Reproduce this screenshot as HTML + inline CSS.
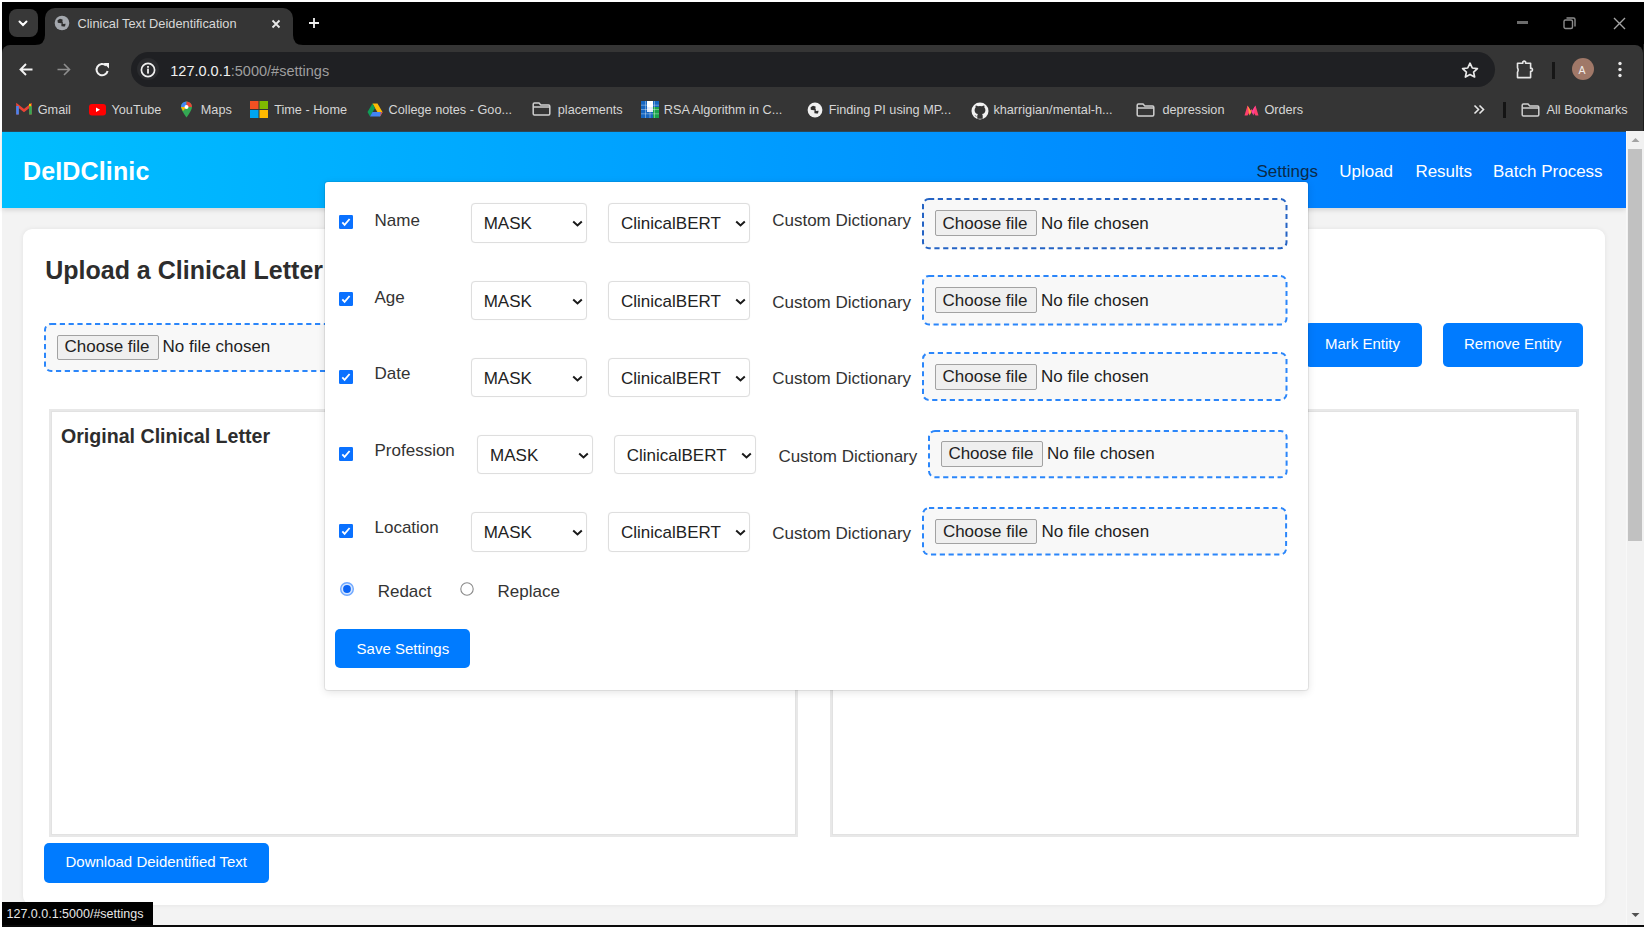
<!DOCTYPE html>
<html><head><meta charset="utf-8"><style>
*{box-sizing:border-box;margin:0;padding:0}
html,body{width:1644px;height:928px;overflow:hidden;background:#fff;font-family:"Liberation Sans",sans-serif}
.a{position:absolute}
.t{position:absolute;white-space:nowrap;line-height:1}
svg{position:absolute;overflow:visible}
</style></head><body>
<div class="a" style="left:2.0px;top:131.0px;width:1625.0px;height:794.0px;background:#f3f3f3"></div>
<div class="a" style="left:2.0px;top:131.0px;width:1624.0px;height:77.0px;background:linear-gradient(90deg,#00bfff 0%,#0074ff 100%);box-shadow:0 2px 5px rgba(0,0,0,.13)"></div>
<div class="a" style="left:2.0px;top:131.0px;width:1624.0px;height:1.0px;background:#2c4656"></div>
<div class="t" style="left:23.0px;top:159.0px;font-size:25px;color:#fff;font-weight:bold;letter-spacing:0.15px">DeIDClinic</div>
<div class="t" style="left:1256.5px;top:162.9px;font-size:17px;color:#0b2a4a;font-weight:normal;">Settings</div>
<div class="t" style="left:1339.2px;top:162.9px;font-size:17px;color:#fff;font-weight:normal;">Upload</div>
<div class="t" style="left:1415.4px;top:162.9px;font-size:17px;color:#fff;font-weight:normal;">Results</div>
<div class="t" style="left:1493.0px;top:162.9px;font-size:17px;color:#fff;font-weight:normal;">Batch Process</div>
<div class="a" style="left:23.0px;top:229.0px;width:1582.0px;height:676.0px;background:#fff;border-radius:9px;box-shadow:0 0 5px rgba(0,0,0,.07)"></div>
<div class="t" style="left:45.2px;top:258.4px;font-size:25px;color:#2d2d2d;font-weight:bold;">Upload a Clinical Letter</div>
<svg style="left:44.0px;top:323.0px" width="956.0" height="49.0"><rect x="1" y="1" width="954.0" height="47.0" rx="6" ry="6" fill="#f8f8f8" stroke="#2b86fa" stroke-width="2" stroke-dasharray="5.2 3.6"/></svg>
<div class="a" style="left:57.0px;top:334.5px;width:102.0px;height:25.5px;background:#efefef;border:1px solid #a2a2a2;border-radius:2px"></div>
<div class="t" style="left:64.5px;top:337.8px;font-size:17px;color:#222;font-weight:normal;">Choose file</div>
<div class="t" style="left:162.6px;top:337.8px;font-size:17px;color:#1e1e1e;font-weight:normal;">No file chosen</div>
<div class="a" style="left:1305.0px;top:323.0px;width:116.5px;height:44.0px;background:#007bff;border-radius:5px"></div>
<div class="t" style="left:1325.0px;top:336.0px;font-size:15px;color:#fff;font-weight:normal;">Mark Entity</div>
<div class="a" style="left:1443.0px;top:323.0px;width:139.5px;height:44.0px;background:#007bff;border-radius:5px"></div>
<div class="t" style="left:1464.0px;top:336.0px;font-size:15px;color:#fff;font-weight:normal;">Remove Entity</div>
<div class="a" style="left:49.0px;top:409.0px;width:749.0px;height:428.0px;background:#fff;border:2px solid #e8e8e8;box-shadow:inset 0 0 0 1px #e2e2e2"></div>
<div class="a" style="left:830.0px;top:409.0px;width:749.0px;height:428.0px;background:#fff;border:2px solid #e8e8e8;box-shadow:inset 0 0 0 1px #e2e2e2"></div>
<div class="t" style="left:61.0px;top:426.9px;font-size:19.6px;color:#2d2d2d;font-weight:bold;">Original Clinical Letter</div>
<div class="a" style="left:44.0px;top:843.0px;width:225.0px;height:40.0px;background:#007bff;border-radius:5px"></div>
<div class="t" style="left:65.5px;top:854.4px;font-size:15px;color:#fff;font-weight:normal;">Download Deidentified Text</div>
<div class="a" style="left:324.8px;top:182.2px;width:983.7px;height:507.8px;background:#fff;border-radius:3px;box-shadow:0 0 0 1px rgba(0,0,0,.07),0 2px 8px rgba(0,0,0,.12)"></div>
<svg style="left:339px;top:215px" width="14" height="14" viewBox="0 0 14 14"><rect x="0" y="0" width="14" height="14" rx="1.2" fill="#0a71ff"/><path d="M3.3 7.4 L5.6 9.9 L10.6 4" stroke="#fff" stroke-width="1.8" fill="none"/></svg>
<div class="t" style="left:374.5px;top:211.8px;font-size:17px;color:#333;font-weight:normal;">Name</div>
<div class="a" style="left:470.5px;top:203.4px;width:116.0px;height:39.8px;background:#fff;border:1px solid #dedede;border-radius:4px;box-shadow:0 0 1px rgba(0,0,0,.08)"></div>
<div class="t" style="left:483.7px;top:215.3px;font-size:17px;color:#222;font-weight:normal;">MASK</div>
<svg style="left:571.5px;top:220.4px" width="11" height="7" viewBox="0 0 11 7"><path d="M1.2 1.5 L5.5 5.4 L9.8 1.5" stroke="#1a1a1a" stroke-width="2" fill="none"/></svg>
<div class="a" style="left:607.8px;top:203.4px;width:142.5px;height:39.8px;background:#fff;border:1px solid #dedede;border-radius:4px;box-shadow:0 0 1px rgba(0,0,0,.08)"></div>
<div class="t" style="left:621.0px;top:215.3px;font-size:17px;color:#222;font-weight:normal;">ClinicalBERT</div>
<svg style="left:735.3px;top:220.4px" width="11" height="7" viewBox="0 0 11 7"><path d="M1.2 1.5 L5.5 5.4 L9.8 1.5" stroke="#1a1a1a" stroke-width="2" fill="none"/></svg>
<div class="t" style="left:772.2px;top:212.4px;font-size:17px;color:#333;font-weight:normal;">Custom Dictionary</div>
<svg style="left:922.0px;top:197.7px" width="365.5" height="51.2"><rect x="1" y="1" width="363.5" height="49.2" rx="6" ry="6" fill="#f8f8f8" stroke="#2463c4" stroke-width="2" stroke-dasharray="5.2 3.6"/></svg>
<div class="a" style="left:935.0px;top:210.0px;width:102.0px;height:25.5px;background:#efefef;border:1px solid #a2a2a2;border-radius:2px"></div>
<div class="t" style="left:942.5px;top:214.5px;font-size:17px;color:#222;font-weight:normal;">Choose file</div>
<div class="t" style="left:1041.1px;top:214.5px;font-size:17px;color:#1e1e1e;font-weight:normal;">No file chosen</div>
<svg style="left:339px;top:292.3px" width="14" height="14" viewBox="0 0 14 14"><rect x="0" y="0" width="14" height="14" rx="1.2" fill="#0a71ff"/><path d="M3.3 7.4 L5.6 9.9 L10.6 4" stroke="#fff" stroke-width="1.8" fill="none"/></svg>
<div class="t" style="left:374.5px;top:289.0px;font-size:17px;color:#333;font-weight:normal;">Age</div>
<div class="a" style="left:470.5px;top:280.6px;width:116.0px;height:39.8px;background:#fff;border:1px solid #dedede;border-radius:4px;box-shadow:0 0 1px rgba(0,0,0,.08)"></div>
<div class="t" style="left:483.7px;top:292.5px;font-size:17px;color:#222;font-weight:normal;">MASK</div>
<svg style="left:571.5px;top:297.6px" width="11" height="7" viewBox="0 0 11 7"><path d="M1.2 1.5 L5.5 5.4 L9.8 1.5" stroke="#1a1a1a" stroke-width="2" fill="none"/></svg>
<div class="a" style="left:607.8px;top:280.6px;width:142.5px;height:39.8px;background:#fff;border:1px solid #dedede;border-radius:4px;box-shadow:0 0 1px rgba(0,0,0,.08)"></div>
<div class="t" style="left:621.0px;top:292.5px;font-size:17px;color:#222;font-weight:normal;">ClinicalBERT</div>
<svg style="left:735.3px;top:297.6px" width="11" height="7" viewBox="0 0 11 7"><path d="M1.2 1.5 L5.5 5.4 L9.8 1.5" stroke="#1a1a1a" stroke-width="2" fill="none"/></svg>
<div class="t" style="left:772.2px;top:293.9px;font-size:17px;color:#333;font-weight:normal;">Custom Dictionary</div>
<svg style="left:922.0px;top:275.0px" width="365.5" height="50.4"><rect x="1" y="1" width="363.5" height="48.4" rx="6" ry="6" fill="#f8f8f8" stroke="#2b86fa" stroke-width="2" stroke-dasharray="5.2 3.6"/></svg>
<div class="a" style="left:935.0px;top:287.2px;width:102.0px;height:25.5px;background:#efefef;border:1px solid #a2a2a2;border-radius:2px"></div>
<div class="t" style="left:942.5px;top:291.6px;font-size:17px;color:#222;font-weight:normal;">Choose file</div>
<div class="t" style="left:1041.1px;top:291.6px;font-size:17px;color:#1e1e1e;font-weight:normal;">No file chosen</div>
<svg style="left:339px;top:370px" width="14" height="14" viewBox="0 0 14 14"><rect x="0" y="0" width="14" height="14" rx="1.2" fill="#0a71ff"/><path d="M3.3 7.4 L5.6 9.9 L10.6 4" stroke="#fff" stroke-width="1.8" fill="none"/></svg>
<div class="t" style="left:374.5px;top:365.1px;font-size:17px;color:#333;font-weight:normal;">Date</div>
<div class="a" style="left:470.5px;top:357.6px;width:116.0px;height:39.8px;background:#fff;border:1px solid #dedede;border-radius:4px;box-shadow:0 0 1px rgba(0,0,0,.08)"></div>
<div class="t" style="left:483.7px;top:369.5px;font-size:17px;color:#222;font-weight:normal;">MASK</div>
<svg style="left:571.5px;top:374.6px" width="11" height="7" viewBox="0 0 11 7"><path d="M1.2 1.5 L5.5 5.4 L9.8 1.5" stroke="#1a1a1a" stroke-width="2" fill="none"/></svg>
<div class="a" style="left:607.8px;top:357.6px;width:142.5px;height:39.8px;background:#fff;border:1px solid #dedede;border-radius:4px;box-shadow:0 0 1px rgba(0,0,0,.08)"></div>
<div class="t" style="left:621.0px;top:369.5px;font-size:17px;color:#222;font-weight:normal;">ClinicalBERT</div>
<svg style="left:735.3px;top:374.6px" width="11" height="7" viewBox="0 0 11 7"><path d="M1.2 1.5 L5.5 5.4 L9.8 1.5" stroke="#1a1a1a" stroke-width="2" fill="none"/></svg>
<div class="t" style="left:772.2px;top:370.4px;font-size:17px;color:#333;font-weight:normal;">Custom Dictionary</div>
<svg style="left:922.0px;top:352.3px" width="365.5" height="49.0"><rect x="1" y="1" width="363.5" height="47.0" rx="6" ry="6" fill="#f8f8f8" stroke="#2b86fa" stroke-width="2" stroke-dasharray="5.2 3.6"/></svg>
<div class="a" style="left:935.0px;top:364.0px;width:102.0px;height:25.5px;background:#efefef;border:1px solid #a2a2a2;border-radius:2px"></div>
<div class="t" style="left:942.5px;top:368.2px;font-size:17px;color:#222;font-weight:normal;">Choose file</div>
<div class="t" style="left:1041.1px;top:368.2px;font-size:17px;color:#1e1e1e;font-weight:normal;">No file chosen</div>
<svg style="left:339px;top:447.4px" width="14" height="14" viewBox="0 0 14 14"><rect x="0" y="0" width="14" height="14" rx="1.2" fill="#0a71ff"/><path d="M3.3 7.4 L5.6 9.9 L10.6 4" stroke="#fff" stroke-width="1.8" fill="none"/></svg>
<div class="t" style="left:374.5px;top:441.6px;font-size:17px;color:#333;font-weight:normal;">Profession</div>
<div class="a" style="left:476.9px;top:434.6px;width:116.0px;height:39.8px;background:#fff;border:1px solid #dedede;border-radius:4px;box-shadow:0 0 1px rgba(0,0,0,.08)"></div>
<div class="t" style="left:490.1px;top:446.5px;font-size:17px;color:#222;font-weight:normal;">MASK</div>
<svg style="left:577.9px;top:451.6px" width="11" height="7" viewBox="0 0 11 7"><path d="M1.2 1.5 L5.5 5.4 L9.8 1.5" stroke="#1a1a1a" stroke-width="2" fill="none"/></svg>
<div class="a" style="left:613.5px;top:434.6px;width:142.5px;height:39.8px;background:#fff;border:1px solid #dedede;border-radius:4px;box-shadow:0 0 1px rgba(0,0,0,.08)"></div>
<div class="t" style="left:626.7px;top:446.5px;font-size:17px;color:#222;font-weight:normal;">ClinicalBERT</div>
<svg style="left:741.0px;top:451.6px" width="11" height="7" viewBox="0 0 11 7"><path d="M1.2 1.5 L5.5 5.4 L9.8 1.5" stroke="#1a1a1a" stroke-width="2" fill="none"/></svg>
<div class="t" style="left:778.4px;top:447.6px;font-size:17px;color:#333;font-weight:normal;">Custom Dictionary</div>
<svg style="left:927.9px;top:430.3px" width="359.6" height="48.2"><rect x="1" y="1" width="357.6" height="46.2" rx="6" ry="6" fill="#f8f8f8" stroke="#2b86fa" stroke-width="2" stroke-dasharray="5.2 3.6"/></svg>
<div class="a" style="left:940.9px;top:441.4px;width:102.0px;height:25.5px;background:#efefef;border:1px solid #a2a2a2;border-radius:2px"></div>
<div class="t" style="left:948.4px;top:445.0px;font-size:17px;color:#222;font-weight:normal;">Choose file</div>
<div class="t" style="left:1047.0px;top:445.0px;font-size:17px;color:#1e1e1e;font-weight:normal;">No file chosen</div>
<svg style="left:339px;top:523.6px" width="14" height="14" viewBox="0 0 14 14"><rect x="0" y="0" width="14" height="14" rx="1.2" fill="#0a71ff"/><path d="M3.3 7.4 L5.6 9.9 L10.6 4" stroke="#fff" stroke-width="1.8" fill="none"/></svg>
<div class="t" style="left:374.5px;top:518.6px;font-size:17px;color:#333;font-weight:normal;">Location</div>
<div class="a" style="left:470.5px;top:511.8px;width:116.0px;height:39.8px;background:#fff;border:1px solid #dedede;border-radius:4px;box-shadow:0 0 1px rgba(0,0,0,.08)"></div>
<div class="t" style="left:483.7px;top:523.7px;font-size:17px;color:#222;font-weight:normal;">MASK</div>
<svg style="left:571.5px;top:528.8px" width="11" height="7" viewBox="0 0 11 7"><path d="M1.2 1.5 L5.5 5.4 L9.8 1.5" stroke="#1a1a1a" stroke-width="2" fill="none"/></svg>
<div class="a" style="left:607.8px;top:511.8px;width:142.5px;height:39.8px;background:#fff;border:1px solid #dedede;border-radius:4px;box-shadow:0 0 1px rgba(0,0,0,.08)"></div>
<div class="t" style="left:621.0px;top:523.7px;font-size:17px;color:#222;font-weight:normal;">ClinicalBERT</div>
<svg style="left:735.3px;top:528.8px" width="11" height="7" viewBox="0 0 11 7"><path d="M1.2 1.5 L5.5 5.4 L9.8 1.5" stroke="#1a1a1a" stroke-width="2" fill="none"/></svg>
<div class="t" style="left:772.2px;top:524.5px;font-size:17px;color:#333;font-weight:normal;">Custom Dictionary</div>
<svg style="left:922.4px;top:506.7px" width="365.1" height="48.6"><rect x="1" y="1" width="363.1" height="46.6" rx="6" ry="6" fill="#f8f8f8" stroke="#2b86fa" stroke-width="2" stroke-dasharray="5.2 3.6"/></svg>
<div class="a" style="left:935.4px;top:518.9px;width:102.0px;height:25.5px;background:#efefef;border:1px solid #a2a2a2;border-radius:2px"></div>
<div class="t" style="left:942.9px;top:522.5px;font-size:17px;color:#222;font-weight:normal;">Choose file</div>
<div class="t" style="left:1041.5px;top:522.5px;font-size:17px;color:#1e1e1e;font-weight:normal;">No file chosen</div>
<svg style="left:340px;top:582px" width="14" height="14" viewBox="0 0 14 14"><circle cx="7" cy="7" r="6.3" fill="#d6e6ff" stroke="#6fa8ff" stroke-width="1.4"/><circle cx="7" cy="7" r="3.9" fill="#0a64f5"/></svg>
<div class="t" style="left:377.7px;top:583.4px;font-size:17px;color:#333;font-weight:normal;">Redact</div>
<svg style="left:460px;top:582px" width="14" height="14" viewBox="0 0 14 14"><circle cx="7" cy="7" r="6.2" fill="#fff" stroke="#8a8a8a" stroke-width="1.1"/></svg>
<div class="t" style="left:497.5px;top:583.4px;font-size:17px;color:#333;font-weight:normal;">Replace</div>
<div class="a" style="left:335.3px;top:628.5px;width:134.7px;height:39.5px;background:#007bff;border-radius:5px"></div>
<div class="t" style="left:356.6px;top:640.9px;font-size:15px;color:#fff;font-weight:normal;">Save Settings</div>
<div class="a" style="left:1626.0px;top:131.0px;width:18.0px;height:794.0px;background:#f1f1f1;border-left:1px solid #f8f8f8"></div>
<div class="a" style="left:1628.0px;top:148.5px;width:14.0px;height:392.5px;background:#c1c1c1"></div>
<svg style="left:1631px;top:137px" width="9" height="6" viewBox="0 0 9 6"><path d="M0.5 5 L4.5 1 L8.5 5 Z" fill="#a3a3a3"/></svg>
<svg style="left:1631px;top:912px" width="9" height="6" viewBox="0 0 9 6"><path d="M0.5 1 L4.5 5 L8.5 1 Z" fill="#505050"/></svg>
<div class="a" style="left:2.0px;top:2.0px;width:1642.0px;height:54.0px;background:#000"></div>
<div class="a" style="left:9.0px;top:9.0px;width:29.0px;height:28.0px;background:#383838;border-radius:8px"></div>
<svg style="left:17.0px;top:19.0px" width="12" height="9" viewBox="0 0 12 9"><path d="M2.5 2.5 L6 6 L9.5 2.5" stroke="#fff" stroke-width="2" fill="none" stroke-linecap="round"/></svg>
<div class="a" style="left:45.0px;top:8.0px;width:248.0px;height:37.0px;background:#353535;border-radius:10px 10px 0 0"></div>
<svg style="left:35.0px;top:35.0px" width="10" height="10" viewBox="0 0 10 10"><path d="M0 10 Q10 10 10 0 L10 10 Z" fill="#353535"/></svg>
<svg style="left:293.0px;top:35.0px" width="10" height="10" viewBox="0 0 10 10"><path d="M10 10 Q0 10 0 0 L0 10 Z" fill="#353535"/></svg>
<svg style="left:53.5px;top:14.8px" width="16" height="16" viewBox="0 0 16 16"><circle cx="8" cy="8" r="7.3" fill="#a4a8ae"/><path d="M3.5 5.2 L6 3.8 L8.6 4.4 L8.4 7.2 L6.6 8.2 L3.8 7.8 Z M7.4 7 H8.8 V11.2 H7.4 Z M8.6 9 L11.6 8.8 L11 11.6 L8.6 11.4 Z" fill="#2e2e2e"/></svg>
<div class="t" style="left:77.5px;top:18.2px;font-size:12.8px;color:#d8d8d8;font-weight:normal;">Clinical Text Deidentification</div>
<svg style="left:271.0px;top:19.0px" width="10" height="10" viewBox="0 0 10 10"><path d="M1.5 1.5 L8.5 8.5 M8.5 1.5 L1.5 8.5" stroke="#e8e8e8" stroke-width="1.8"/></svg>
<svg style="left:308.0px;top:17.0px" width="12" height="12" viewBox="0 0 12 12"><path d="M6 1 V11 M1 6 H11" stroke="#f0f0f0" stroke-width="1.8"/></svg>
<div class="a" style="left:1516.5px;top:21.2px;width:11.5px;height:3.0px;background:#6c6c6c"></div>
<svg style="left:1563.0px;top:17.0px" width="13" height="13" viewBox="0 0 13 13"><rect x="1" y="3" width="8.5" height="8.5" rx="1.5" fill="none" stroke="#8c8c8c" stroke-width="1.4"/><path d="M3.5 1 H10.5 Q12 1 12 2.5 V9.5" fill="none" stroke="#8c8c8c" stroke-width="1.4"/></svg>
<svg style="left:1613.0px;top:17.0px" width="13" height="13" viewBox="0 0 13 13"><path d="M1 1 L12 12 M12 1 L1 12" stroke="#a4a4a4" stroke-width="1.4"/></svg>
<div class="a" style="left:2.0px;top:44.5px;width:1641.0px;height:86.5px;background:#353535;border-radius:8px 8px 0 0"></div>
<svg style="left:18.0px;top:62.0px" width="16" height="15" viewBox="0 0 16 15"><path d="M14.5 7.5 H2.5 M8 2 L2.5 7.5 L8 13" stroke="#f2f2f2" stroke-width="1.9" fill="none"/></svg>
<svg style="left:56.0px;top:62.0px" width="16" height="15" viewBox="0 0 16 15"><path d="M1.5 7.5 H13.5 M8 2 L13.5 7.5 L8 13" stroke="#8e8e8e" stroke-width="1.6" fill="none"/></svg>
<svg style="left:95.0px;top:62.0px" width="16" height="16" viewBox="0 0 16 16"><path d="M12.6 9 A5.6 5.6 0 1 1 11 3.6" stroke="#f2f2f2" stroke-width="2" fill="none"/><path d="M8.5 1 L14 1 L14 6.5 Z" fill="#f2f2f2"/></svg>
<div class="a" style="left:131.4px;top:51.5px;width:1363.6px;height:35.5px;background:#1f2023;border-radius:18px"></div>
<div class="a" style="left:137.4px;top:58.2px;width:22.0px;height:22.0px;background:#2a2b2e;border-radius:50%"></div>
<svg style="left:140.0px;top:61.5px" width="16" height="16" viewBox="0 0 16 16"><circle cx="8" cy="8" r="6.6" fill="none" stroke="#f0f0f0" stroke-width="1.7"/><rect x="7.1" y="6.6" width="1.8" height="5" fill="#f0f0f0"/><rect x="7.1" y="4" width="1.8" height="1.8" fill="#f0f0f0"/></svg>
<div class="t" style="left:170.3px;top:64.1px;font-size:14.5px;color:#f0f0f0">127.0.0.1<span style="color:#9e9e9e">:5000/#settings</span></div>
<svg style="left:1461.0px;top:62.0px" width="18" height="16" viewBox="0 0 18 16"><path d="M9 1.2 L11.3 6 L16.4 6.6 L12.6 10.1 L13.6 15 L9 12.5 L4.4 15 L5.4 10.1 L1.6 6.6 L6.7 6 Z" fill="none" stroke="#e8e8e8" stroke-width="1.7" stroke-linejoin="round"/></svg>
<svg style="left:1515.0px;top:59.0px" width="20" height="20" viewBox="0 0 20 20"><path d="M2.5 4.2 H7.8 V2.8 Q9.2 1.6 10.6 2.8 V4.2 H15.6 V9.4 H16.8 Q18.2 10.8 16.8 12.2 H15.6 V18.6 H2.5 V13.2 Q3.8 11 2.5 8.8 Z" fill="none" stroke="#e6e6e6" stroke-width="1.6" stroke-linejoin="round"/></svg>
<div class="a" style="left:1552.0px;top:61.5px;width:3.0px;height:17.0px;background:#161616"></div>
<div class="a" style="left:1571.5px;top:58.0px;width:22.0px;height:22.0px;background:#a07868;border-radius:50%"></div>
<div class="t" style="left:1578.6px;top:64.6px;font-size:10.5px;color:#f0ecea;font-weight:normal;">A</div>
<svg style="left:1617.0px;top:61.0px" width="6" height="17" viewBox="0 0 6 17"><circle cx="3" cy="2.5" r="1.7" fill="#e8e8e8"/><circle cx="3" cy="8.5" r="1.7" fill="#e8e8e8"/><circle cx="3" cy="14.5" r="1.7" fill="#e8e8e8"/></svg>
<div class="a" style="left:1643.0px;top:44.0px;width:1.0px;height:87.0px;background:#1c1c1c"></div>
<svg style="left:15.5px;top:103.4px" width="16" height="12" viewBox="0 0 16 12"><path d="M1.5 11.5 V2.5 L8 7.5 L14.5 2.5 V11.5" fill="none" stroke="#ea4335" stroke-width="2.6"/><path d="M1.5 11.5 V3" stroke="#4285f4" stroke-width="2.6"/><path d="M14.5 11.5 V3" stroke="#34a853" stroke-width="2.6"/><path d="M13 2 L15 2" stroke="#fbbc04" stroke-width="2.6"/></svg>
<div class="t" style="left:37.7px;top:104.4px;font-size:12.7px;color:#d6d6d6;font-weight:normal;">Gmail</div>
<svg style="left:88.5px;top:104.0px" width="17" height="12" viewBox="0 0 17 12"><rect x="0" y="0" width="17" height="11.5" rx="3" fill="#ff0000"/><path d="M7 3.5 L11 5.75 L7 8 Z" fill="#fff"/></svg>
<div class="t" style="left:111.5px;top:104.4px;font-size:12.7px;color:#d6d6d6;font-weight:normal;">YouTube</div>
<svg style="left:179.5px;top:101.0px" width="13" height="17" viewBox="0 0 13 17"><path d="M6.5 16.5 Q1 9 1 6 A5.5 5.5 0 0 1 12 6 Q12 9 6.5 16.5 Z" fill="#34a853"/><path d="M1 6 A5.5 5.5 0 0 1 6.5 0.5 L6.5 6 Z" fill="#4285f4"/><path d="M6.5 0.5 A5.5 5.5 0 0 1 12 6 L6.5 6 Z" fill="#ea4335"/><path d="M1 6 L6.5 6 L3 10 Z" fill="#fbbc04"/><circle cx="6.5" cy="6" r="2" fill="#fff"/></svg>
<div class="t" style="left:200.8px;top:104.4px;font-size:12.7px;color:#d6d6d6;font-weight:normal;">Maps</div>
<svg style="left:249.7px;top:101.0px" width="18" height="17" viewBox="0 0 18 17"><rect x="0" y="0" width="8.5" height="8" fill="#f25022"/><rect x="9.5" y="0" width="8.5" height="8" fill="#7fba00"/><rect x="0" y="9" width="8.5" height="8" fill="#00a4ef"/><rect x="9.5" y="9" width="8.5" height="8" fill="#ffb900"/></svg>
<div class="t" style="left:274.2px;top:104.4px;font-size:12.7px;color:#d6d6d6;font-weight:normal;">Time - Home</div>
<svg style="left:366.5px;top:103.4px" width="16" height="14" viewBox="0 0 16 14"><path d="M5.5 0.5 H10.5 L15.5 9 L13 13.5 L8 5 Z" fill="#fbbc04"/><path d="M5.5 0.5 L8 5 L3 13.5 L0.5 9 Z" fill="#0f9d58"/><path d="M3 13.5 L5.5 9 H15.5 L13 13.5 Z" fill="#4285f4"/><path d="M13 13.5 L15.5 9 L14 9 Z" fill="#ea4335"/></svg>
<div class="t" style="left:388.6px;top:104.4px;font-size:12.7px;color:#d6d6d6;font-weight:normal;">College notes - Goo...</div>
<svg style="left:532.3px;top:102.3px" width="19" height="14" viewBox="0 0 19 14"><path d="M1.2 2.2 Q1.2 1 2.4 1 H7 L8.8 3 H16.6 Q17.8 3 17.8 4.2 V11.8 Q17.8 13 16.6 13 H2.4 Q1.2 13 1.2 11.8 Z M1.2 5 H17.8" fill="none" stroke="#cfcfcf" stroke-width="1.5"/></svg>
<div class="t" style="left:557.8px;top:104.4px;font-size:12.7px;color:#d6d6d6;font-weight:normal;">placements</div>
<svg style="left:640.6px;top:101.0px" width="18" height="17" viewBox="0 0 18 17"><rect x="0" y="0" width="18" height="17" fill="#1565c0"/><rect x="6" y="0" width="6" height="6" fill="#fff"/><rect x="12" y="6" width="6" height="11" fill="#1aa34a"/><rect x="6" y="6" width="6" height="5" fill="#e0e8f8"/><path d="M0 4.2 H18 M0 8.5 H18 M0 12.8 H18 M4.5 0 V17 M9 0 V17 M13.5 0 V17" stroke="#ffffff" stroke-opacity=".45" stroke-width=".8"/></svg>
<div class="t" style="left:663.8px;top:104.4px;font-size:12.7px;color:#d6d6d6;font-weight:normal;">RSA Algorithm in C...</div>
<svg style="left:806.6px;top:102.3px" width="16" height="16" viewBox="0 0 16 16"><circle cx="8" cy="8" r="7.4" fill="#f0f0f0"/><path d="M3.6 5.2 L6 3.8 L8.6 4.4 L8.4 7.2 L6.6 8.2 L3.8 7.8 Z M7.4 7 H8.8 V11.2 H7.4 Z M8.6 9 L11.6 8.8 L11 11.6 L8.6 11.4 Z" fill="#303030"/></svg>
<div class="t" style="left:828.7px;top:104.4px;font-size:12.7px;color:#d6d6d6;font-weight:normal;">Finding PI using MP...</div>
<svg style="left:970.5px;top:101.5px" width="18" height="18" viewBox="0 0 18 18"><circle cx="9" cy="9" r="8.5" fill="#f2f2f2"/><path d="M6.3 16.8 V13.6 Q6.3 12.5 7 12 Q4 11.6 3.6 8.5 Q3.5 6.6 4.6 5.6 Q4.3 4.4 4.8 3.4 Q6 3.4 7 4.3 Q9 3.7 11 4.3 Q12 3.4 13.2 3.4 Q13.7 4.4 13.4 5.6 Q14.5 6.6 14.4 8.5 Q14 11.6 11 12 Q11.7 12.5 11.7 13.6 V16.8 Z M6.3 14.5 Q4.5 14.8 3.5 13" fill="#353535"/></svg>
<div class="t" style="left:993.4px;top:104.4px;font-size:12.7px;color:#d6d6d6;font-weight:normal;">kharrigian/mental-h...</div>
<svg style="left:1136.2px;top:103.3px" width="19" height="14" viewBox="0 0 19 14"><path d="M1.2 2.2 Q1.2 1 2.4 1 H7 L8.8 3 H16.6 Q17.8 3 17.8 4.2 V11.8 Q17.8 13 16.6 13 H2.4 Q1.2 13 1.2 11.8 Z M1.2 5 H17.8" fill="none" stroke="#cfcfcf" stroke-width="1.5"/></svg>
<div class="t" style="left:1162.4px;top:104.4px;font-size:12.7px;color:#d6d6d6;font-weight:normal;">depression</div>
<svg style="left:1243.5px;top:104.5px" width="15" height="11" viewBox="0 0 15 11"><path d="M0.5 10.5 L3.5 0.5 L7.5 7 L11.5 0.5 L14.5 10.5 L11.5 10.5 L7.5 4 L3.5 10.5 Z" fill="#ff3f6c"/><path d="M3.5 0.5 L7.5 7 L5.5 10.5 Z" fill="#ff9a3c"/><path d="M11.5 0.5 L7.5 7 L9.5 10.5 Z" fill="#ff3f9c"/></svg>
<div class="t" style="left:1264.4px;top:104.4px;font-size:12.7px;color:#d6d6d6;font-weight:normal;">Orders</div>
<svg style="left:1473.0px;top:104.0px" width="12" height="11" viewBox="0 0 12 11"><path d="M1.5 1.5 L5.5 5.5 L1.5 9.5 M6.5 1.5 L10.5 5.5 L6.5 9.5" fill="none" stroke="#e8e8e8" stroke-width="1.6"/></svg>
<div class="a" style="left:1503.0px;top:101.7px;width:3.0px;height:16.6px;background:#141414"></div>
<svg style="left:1520.7px;top:103.3px" width="19" height="14" viewBox="0 0 19 14"><path d="M1.2 2.2 Q1.2 1 2.4 1 H7 L8.8 3 H16.6 Q17.8 3 17.8 4.2 V11.8 Q17.8 13 16.6 13 H2.4 Q1.2 13 1.2 11.8 Z M1.2 5 H17.8" fill="none" stroke="#cfcfcf" stroke-width="1.5"/></svg>
<div class="t" style="left:1546.6px;top:104.4px;font-size:12.7px;color:#d6d6d6;font-weight:normal;">All Bookmarks</div>
<div class="a" style="left:2.0px;top:902.0px;width:151.0px;height:23.0px;background:#000"></div>
<div class="t" style="left:6.5px;top:907.9px;font-size:12.5px;color:#e8e8e8;font-weight:normal;">127.0.0.1:5000/#settings</div>
<div class="a" style="left:2.0px;top:925.0px;width:1642.0px;height:2.0px;background:#0a0a0a"></div>
</body></html>
